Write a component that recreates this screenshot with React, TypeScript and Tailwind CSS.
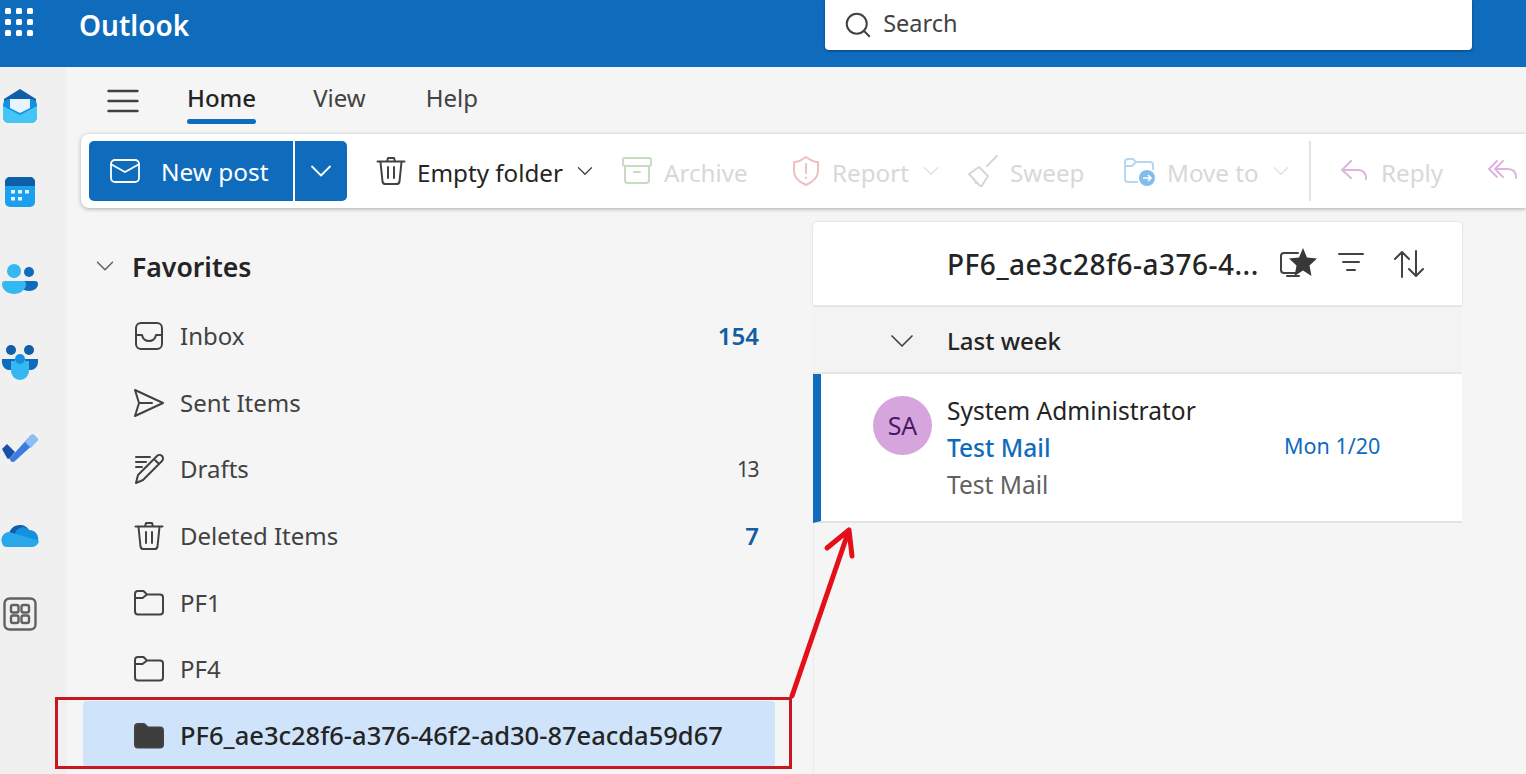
import { ChevronDown, Search } from "lucide-react";
import type { ReactNode } from "react";

const FONT = "font-['Noto_Sans','Open_Sans',sans-serif]";

function Icon({ size = 32, color = "#424242", sw = 2, children, className = "" }: { size?: number; color?: string; sw?: number; children: ReactNode; className?: string }) {
  return (
    <svg width={size} height={size} viewBox="0 0 32 32" fill="none" stroke={color} strokeWidth={sw} strokeLinecap="round" strokeLinejoin="round" className={`shrink-0 ${className}`}>
      {children}
    </svg>
  );
}

const TrashIcon = ({ color = "#424242" }: { color?: string }) => (
  <Icon color={color}>
    <path d="M2.500 6.500h27M12 6.500l1-3.500h6l1 3.500M5.500 7l2 19.500a3 3 0 0 0 3 2.500h11a3 3 0 0 0 3-2.500l2-19.500M13 12v11M19 12v11" />
  </Icon>
);

const FolderIcon = ({ filled = false }: { filled?: boolean }) => (
  <Icon color="#424242">
    {filled ? (
      <path fill="#3d3d3d" d="M2 7a3 3 0 0 1 3-3h6l4 3.500h12a3 3 0 0 1 3 3v14a3 3 0 0 1-3 3H5a3 3 0 0 1-3-3z" />
    ) : (
      <path d="M2 7a3 3 0 0 1 3-3h5.500l3.500 3.500h13a3 3 0 0 1 3 3v14a3 3 0 0 1-3 3H5a3 3 0 0 1-3-3zM2 11h7.500l4.500-3.500" />
    )}
  </Icon>
);

function FolderRow({ icon, label, count, strong, selected }: { icon: ReactNode; label: string; count?: string; strong?: boolean; selected?: boolean }) {
  return (
    <div className={`flex items-center rounded-[4px] pl-[50px] pr-[16px] ${selected ? "-mt-[2px] h-[66px] bg-[#cfe4fa] pt-[4px]" : "h-[66.600px]"}`}>
      <div className="flex w-[47px] items-center">{icon}</div>
      <span className={`flex-1 whitespace-nowrap ${selected ? "text-[25.500px] font-medium text-[#242424]" : "text-[24px] text-[#424242]"}`}>{label}</span>
      {count && <span className={strong ? "text-[24px] font-semibold text-[#115ea3]" : "pr-[1px] text-[21px] tracking-[-1.500px] text-[#424242]"}>{count}</span>}
    </div>
  );
}

function ToolItem({ icon, label, muted, chevron, width, gap = "ml-[9px]" }: { icon: ReactNode; label: string; muted?: boolean; chevron?: boolean; width: string; gap?: string }) {
  return (
    <div className={`flex shrink-0 items-center ${width}`}>
      {icon}
      <span className={`relative top-[2px] ${gap} whitespace-nowrap text-[24.200px] ${muted ? "text-[#d8d8d8]" : "text-[#242424]"}`}>{label}</span>
      {chevron && <ChevronDown size={26} strokeWidth={1.2} className={`ml-[9px] ${muted ? "text-[#e0e0e0]" : "text-[#424242]"}`} />}
    </div>
  );
}

function RailIcons() {
  return (
    <div className="flex w-[67px] shrink-0 flex-col items-center bg-[#f0f0f0] pr-[27px] pt-[21px]">
      {/* mail */}
      <svg width="38" height="36" viewBox="0 0 38 36" className="shrink-0">
        <path fill="#0f5ea8" d="M19 1 35 11v5H3v-5z" />
        <rect x="2" y="11" width="34" height="24" rx="6" fill="#1490df" />
        <path fill="#e8f4fd" d="M9 11h20v9l-10 5-10-5z" />
        <path fill="#43c5f5" d="M2 18l17 9 17-9v11a6 6 0 0 1-6 6H8a6 6 0 0 1-6-6z" />
      </svg>
      <svg width="32" height="32" viewBox="0 0 32 32" className="mt-[52px] shrink-0">
        <rect x="1" y="1" width="30" height="30" rx="5" fill="#1aa0ee" />
        <path fill="#0f5ea8" d="M1 6a5 5 0 0 1 5-5h20a5 5 0 0 1 5 5v4H1z" />
        <g fill="#e8f4fd">
          <rect x="7" y="14" width="4" height="3.500" />
          <rect x="14" y="14" width="4" height="3.500" />
          <rect x="21" y="14" width="4" height="3.500" />
          <rect x="7" y="21" width="4" height="3.500" />
          <rect x="14" y="21" width="4" height="3.500" />
        </g>
      </svg>
      <svg width="36" height="30" viewBox="0 0 36 30" className="mt-[56px] shrink-0">
        <circle cx="27" cy="8" r="5" fill="#0f6cbd" />
        <path fill="#0f6cbd" d="M18 17h15a3 3 0 0 1 3 3c0 4-4 7-9 7s-9-3-9-7z" />
        <circle cx="12" cy="7" r="7" fill="#35b8f1" />
        <path fill="#35b8f1" d="M0 20a3 3 0 0 1 3-3h18a3 3 0 0 1 3 3c0 6-6 10-12 10S0 26 0 20z" />
      </svg>
      <svg width="36" height="36" viewBox="0 0 36 36" className="mt-[51px] shrink-0">
        <circle cx="9" cy="5" r="5" fill="#0f5ea8" />
        <circle cx="27" cy="5" r="5" fill="#0f5ea8" />
        <path fill="#0f6cbd" d="M0 14h13v6c0 3-3 5-6 5-4 0-7-4-7-8zM23 14h13v3c0 4-3 8-7 8-3 0-6-2-6-5z" />
        <path fill="#35b8f1" d="M9 16h18v10a9 9 0 0 1-18 0z" />
        <circle cx="18" cy="14" r="5" fill="#1490df" />
      </svg>
      <svg width="38" height="30" viewBox="0 0 38 30" className="mt-[51px] shrink-0">
        <path fill="#1c4fa8" d="M1 17l5-5 8 8-5 6a2 2 0 0 1-3 0z" />
        <path fill="#3b7ce0" d="M9 26 30 3a3 3 0 0 1 3 0l3 3a2 2 0 0 1 0 3L14 29a3 3 0 0 1-5-3z" />
        <path fill="#8cc0f5" d="M24 10 30 3a3 3 0 0 1 3 0l3 3a2 2 0 0 1 0 3l-6 7z" />
      </svg>
      <svg width="38" height="26" viewBox="0 0 38 26" className="mt-[60px] shrink-0">
        <path fill="#0f5ea8" d="M8 12a11 11 0 0 1 20-4l-8 12H8z" />
        <path fill="#1490df" d="M14 14a8 8 0 0 1 14-6 9 9 0 0 1 9 11l-13 2z" />
        <path fill="#28a8ea" d="M8 10a8 8 0 0 0-7 11 5 5 0 0 0 5 4h24c4 0 7-2 8-6L19 13z" />
      </svg>
      <svg width="34" height="34" viewBox="0 0 34 34" fill="none" stroke="#616161" strokeWidth="2.400" className="mt-[49px] shrink-0">
        <rect x="1.500" y="1.500" width="31" height="31" rx="5" />
        <rect x="8" y="8" width="7.500" height="7.500" rx="2" />
        <rect x="18.500" y="8" width="7.500" height="7.500" rx="2" />
        <rect x="8" y="18.500" width="7.500" height="7.500" rx="2" />
        <rect x="18.500" y="18.500" width="7.500" height="7.500" rx="2" />
      </svg>
    </div>
  );
}

export default function App() {
  return (
    <div className={`relative h-[774px] w-[1526px] overflow-hidden bg-[#f5f5f5] ${FONT}`}>
      <header className="flex h-[67px] bg-[#0f6cbd]">
        <div className="ml-[5px] mt-[8px] grid h-[28px] w-[28px] grid-cols-3 gap-[5px]">
          {Array.from({ length: 9 }).map((_, i) => (
            <span key={i} className="h-[6px] w-[6px] rounded-[1.500px] bg-white" />
          ))}
        </div>
        <div className="ml-[46px] mt-[6px] text-[28px] font-semibold leading-[38px] text-white">Outlook</div>
        <div className="ml-[636px] flex h-[50px] w-[647px] items-center rounded-b-[4px] bg-white pl-[18px] shadow-[0_1px_3px_rgba(0,0,0,0.4)]">
          <Search size={30} strokeWidth={1.6} className="text-[#424242]" />
          <span className="relative -top-[1px] ml-[10px] text-[23.500px] text-[#424242]">Search</span>
        </div>
      </header>

      <div className="flex h-[707px]">
        <RailIcons />
        <div className="min-w-0 flex-1">
          {/* tabs */}
          <div className="flex h-[67px] items-center pl-[40px]">
            <svg width="32" height="24" viewBox="0 0 32 24" className="shrink-0" stroke="#424242" strokeWidth="2.400" strokeLinecap="round">
              <path d="M1.500 2h29M1.500 12h29M1.500 22h29" />
            </svg>
            <div className="relative ml-[48px] flex h-[67px] items-center pb-[6px] text-[24px] font-medium text-[#242424]">
              Home
              <span className="absolute bottom-[10px] left-0 right-0 h-[5px] rounded-[3px] bg-[#0f6cbd]" />
            </div>
            <div className="ml-[57px] pb-[6px] text-[24px] text-[#424242]">View</div>
            <div className="ml-[60px] pb-[6px] text-[24px] text-[#424242]">Help</div>
          </div>

          {/* ribbon */}
          <div className="ml-[14px] flex h-[74px] items-center overflow-hidden rounded-l-[8px] bg-white pl-[8px] shadow-[0_1px_4px_rgba(0,0,0,0.3)]">
            <div className="flex h-[60px] w-[204px] shrink-0 items-center rounded-l-[5px] bg-[#0f6cbd] pl-[20px] text-white">
              <Icon color="#ffffff" sw={1.800}>
                <rect x="2" y="5" width="28" height="22" rx="4" />
                <path d="M2.500 9.500 16 17l13.500-7.500" />
              </Icon>
              <span className="relative top-[1px] ml-[20px] whitespace-nowrap text-[24.400px]">New post</span>
            </div>
            <div className="ml-[2px] flex h-[60px] w-[52px] shrink-0 items-center justify-center rounded-r-[5px] bg-[#0f6cbd]">
              <ChevronDown size={36} strokeWidth={1.200} className="text-white" />
            </div>
            <div className="ml-[28px] flex items-center">
              <ToolItem width="w-[246px]" gap="ml-[10px]" chevron label="Empty folder" icon={<TrashIcon />} />
              <ToolItem width="w-[169px]" gap="ml-[11px]" muted label="Archive" icon={
                <Icon color="#c5dcc0"><rect x="2" y="3" width="28" height="8" rx="2" /><path d="M4 11v14a3 3 0 0 0 3 3h18a3 3 0 0 0 3-3V11M13 17h6" /></Icon>
              } />
              <ToolItem width="w-[176px]" gap="ml-[10px]" muted chevron label="Report" icon={
                <Icon color="#eec0c0"><path d="M16 2c4 3 8 5 12 5v9c0 7-5 11-12 14C9 27 4 23 4 16V7c4 0 8-2 12-5zM16 9v9M16 22.500v.5" /></Icon>
              } />
              <ToolItem width="w-[157px]" gap="ml-[12px]" muted label="Sweep" icon={
                <Icon color="#d6d6d6"><path d="M31 1 21 11M3 19l10-7 9 9-7 11zM10 28l-2-4" /></Icon>
              } />
              <div className="flex w-[186px] shrink-0 items-center">
                <svg width="34" height="32" viewBox="0 0 34 32" fill="none" className="shrink-0">
                  <path stroke="#b7d6ef" strokeWidth="2" d="M2 7a3 3 0 0 1 3-3h5l3 3h14a3 3 0 0 1 3 3v5M15 27H5a3 3 0 0 1-3-3V7M2 11h7l4-4" />
                  <circle cx="24" cy="23" r="8" fill="#83bdec" />
                  <path stroke="#fff" strokeWidth="1.600" fill="none" d="M20 23h8M25 20l3 3-3 3" />
                </svg>
                <span className="relative top-[2px] ml-[10px] whitespace-nowrap text-[24.200px] text-[#d8d8d8]">Move to</span>
                <ChevronDown size={26} strokeWidth={1.2} className="ml-[9px] text-[#e0e0e0]" />
              </div>
              <div className="h-[60px] w-[2px] shrink-0 bg-[#e3e3e3]" />
              <div className="ml-[28px] w-[148px] shrink-0">
                <ToolItem width="" gap="ml-[10px]" muted label="Reply" icon={
                  <Icon color="#dcb4dd"><path d="M12 6 3 15l9 8M3 15h16c5 0 8 3 8 9" /></Icon>
                } />
              </div>
              <Icon color="#dcb4dd"><path d="M10 6 2 14l8 8M16 6l-8 8 8 8M8 14h13c5 0 8 3 8 9" /></Icon>
            </div>
          </div>

          <div className="flex">
            {/* folders */}
            <div className="w-[746px] shrink-0 pl-[16px] pr-[38px]">
              <div className="flex h-[87px] items-end pb-[7px] pl-[7px] text-[26.600px] font-semibold text-[#242424]">
                <ChevronDown size={30} strokeWidth={1.200} className="mb-[7px] text-[#616161]" />
                <span className="ml-[12px]">Favorites</span>
              </div>
              <div className="pt-[8px]">
                <FolderRow label="Inbox" count="154" strong icon={
                  <Icon><rect x="3" y="3" width="26" height="26" rx="5" /><path d="M3 15h6c1 5 4 6 7 6s6-1 7-6h6" /></Icon>
                } />
                <FolderRow label="Sent Items" icon={
                  <Icon><path d="M2 3 30 16 2 29l4-13zM6 16h13" /></Icon>
                } />
                <FolderRow label="Drafts" count="13" icon={
                  <Icon><path d="M3 4h14M3 9h10M3 14h6M3 30l2-8L24 3a3 3 0 0 1 5 5L10 27zM21 6l5 5" /></Icon>
                } />
                <FolderRow label="Deleted Items" count="7" strong icon={<TrashIcon />} />
                <FolderRow label="PF1" icon={<FolderIcon />} />
                <FolderRow label="PF4" icon={<FolderIcon />} />
                <FolderRow label="PF6_ae3c28f6-a376-46f2-ad30-87eacda59d67" selected icon={<FolderIcon filled />} />
              </div>
            </div>

            {/* message list */}
            <div className="mt-[14px] flex h-[600px] w-[649px] shrink-0 flex-col">
              <div className="flex h-[83px] shrink-0 items-center rounded-t-[4px] bg-white pl-[134px] shadow-[0_0_2px_rgba(0,0,0,0.2)]">
                <span className="w-[332px] whitespace-nowrap text-[28px] font-medium tracking-[0.500px] text-[#242424]">PF6_ae3c28f6-a376-4...</span>
                <span className="relative h-[32px] w-[42px]">
                  <svg width="40" height="32" viewBox="0 0 40 32" className="absolute left-0 top-0" fill="none">
                    <path d="M19 5H5a3 3 0 0 0-3 3v14a3 3 0 0 0 3 3h12M8 28h12" stroke="#424242" strokeWidth="2" strokeLinecap="round" />
                    <path fill="#383838" d="M24 0l4 9.500 10 1-7.500 7 2 10.500-8.500-5.500-8.500 5.500 2-10.500-7.500-7 10-1z" />
                  </svg>
                </span>
                <svg width="26" height="20" viewBox="0 0 26 20" className="relative -top-[2px] ml-[17px] shrink-0" stroke="#424242" strokeWidth="2" strokeLinecap="round">
                  <path d="M1 2h24M5 10h16M9 18h8" />
                </svg>
                <svg width="32" height="28" viewBox="0 0 32 28" fill="none" className="ml-[29px] shrink-0" stroke="#424242" strokeWidth="2" strokeLinecap="round" strokeLinejoin="round">
                  <path d="M9 27V2M2 9l7-7 7 7M23 1v25M16 19l7 7 7-7" />
                </svg>
              </div>
              <div className="flex h-[69px] shrink-0 items-center border-y-2 border-[#e6e6e6] bg-[#f3f3f3] pl-[69px] pt-[3px]">
                <ChevronDown size={40} strokeWidth={1} className="text-[#424242]" />
                <span className="ml-[25px] text-[24px] font-medium text-[#242424]">Last week</span>
              </div>
              <div className="flex h-[149px] shrink-0 border-b-2 border-l-[8px] border-b-[#e3e3e3] border-l-[#0f6cbd] bg-white pl-[52px] pt-[18px]">
                <div className="mt-[4px] flex h-[59px] w-[59px] shrink-0 items-center justify-center rounded-full bg-[#d6a5de] text-[25px] text-[#4a1a63]">SA</div>
                <div className="ml-[15px] flex-1">
                  <div className="text-[24.500px] leading-[37px] text-[#242424]">System Administrator</div>
                  <div className="flex items-center leading-[37px]">
                    <span className="w-[337px] text-[24.500px] font-medium text-[#0f6cbd]">Test Mail</span>
                    <span className="relative -top-[2px] text-[21.500px] text-[#0f6cbd]">Mon 1/20</span>
                  </div>
                  <div className="text-[24.500px] leading-[37px] text-[#616161]">Test Mail</div>
                </div>
              </div>
              <div className="flex-1 border-l border-[#ebebeb]" />
            </div>
          </div>
        </div>
      </div>

      {/* red annotation */}
      <div className="absolute left-[55px] top-[697px] h-[72px] w-[737px] border-[3px] border-[#c8171e]" />
      <svg width="80" height="190" viewBox="0 0 80 190" fill="none" className="absolute left-[785px] top-[515px]" stroke="#e3101a" strokeWidth="5" strokeLinecap="round" strokeLinejoin="round">
        <path d="M7 181 64 15M42 33l22-18 3 26" />
      </svg>
    </div>
  );
}
